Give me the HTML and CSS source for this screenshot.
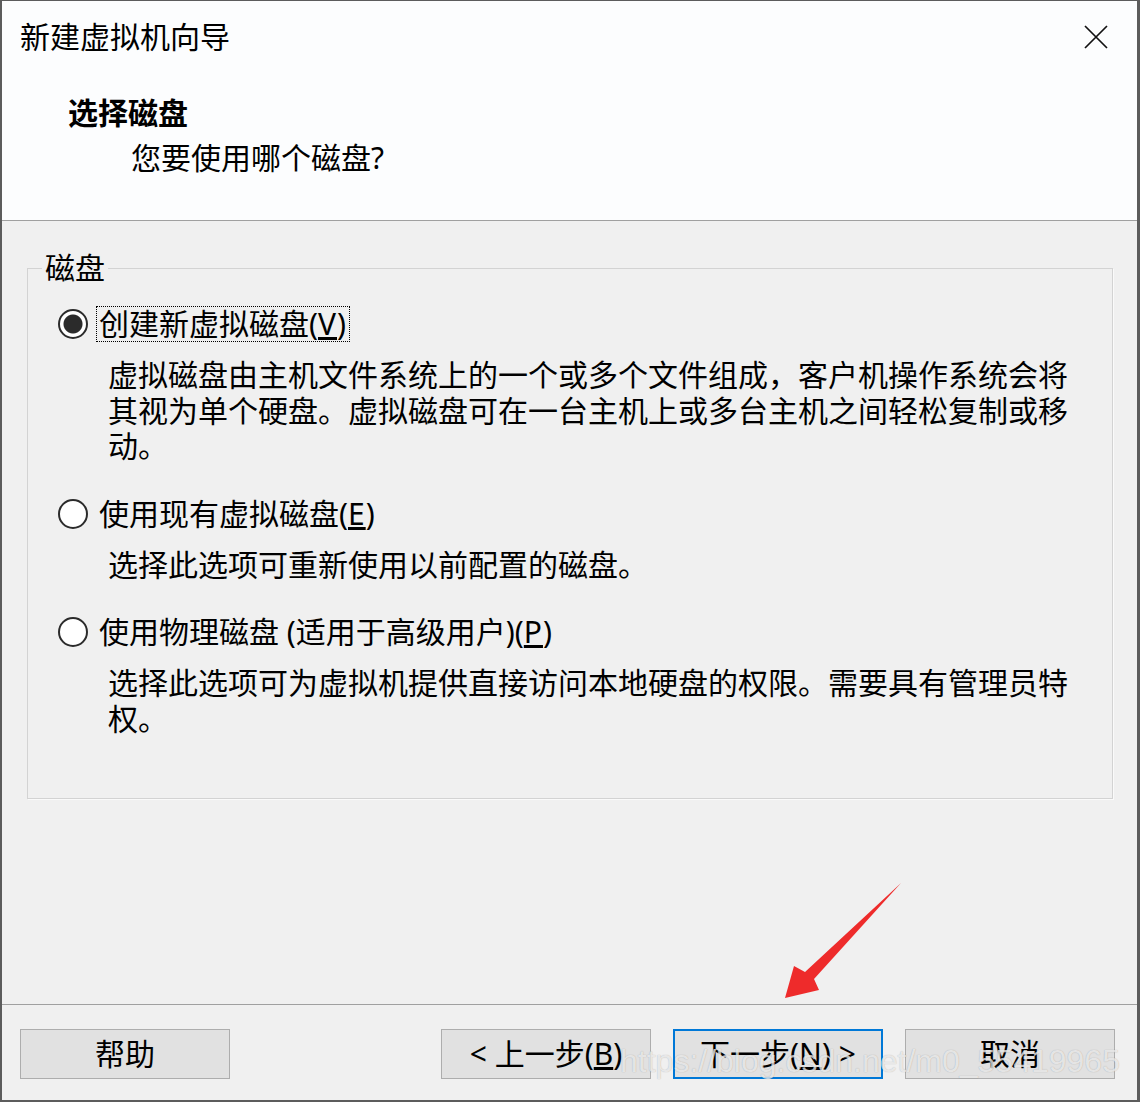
FILE: index.html
```html
<!DOCTYPE html>
<html lang="zh-CN">
<head>
<meta charset="utf-8">
<title>新建虚拟机向导</title>
<link rel="stylesheet" href="styles.css">
</head>
<body>
<div class="window">
  <header class="header">
    <div class="titlebar">
      <span class="title">新建虚拟机向导</span>
      <svg class="close" width="24" height="24" viewBox="0 0 24 24"><path d="M1 1L23 23M23 1L1 23" stroke="#111" stroke-width="1.7" fill="none"/></svg>
    </div>
    <h1 class="heading">选择磁盘</h1>
    <p class="subheading">您要使用哪个磁盘?</p>
  </header>
  <main class="content">
    <fieldset class="group">
      <legend class="legend">磁盘</legend>
      <div class="options">
        <div class="option">
          <span class="radio checked"></span>
          <span class="label focus">创建新虚拟磁盘(<u>V</u>)</span>
        </div>
        <p class="desc">虚拟磁盘由主机文件系统上的一个或多个文件组成，客户机操作系统会将其视为单个硬盘。虚拟磁盘可在一台主机上或多台主机之间轻松复制或移动。</p>
        <div class="option">
          <span class="radio"></span>
          <span class="label">使用现有虚拟磁盘(<u>E</u>)</span>
        </div>
        <p class="desc">选择此选项可重新使用以前配置的磁盘。</p>
        <div class="option">
          <span class="radio"></span>
          <span class="label">使用物理磁盘 (适用于高级用户)(<u>P</u>)</span>
        </div>
        <p class="desc">选择此选项可为虚拟机提供直接访问本地硬盘的权限。需要具有管理员特权。</p>
      </div>
    </fieldset>
  </main>
  <footer class="footer">
    <button class="btn">帮助</button>
    <div class="spacer"></div>
    <button class="btn">&lt; 上一步(<u>B</u>)</button>
    <button class="btn primary">下一步(<u>N</u>) &gt;</button>
    <button class="btn">取消</button>
    <span class="watermark">https://blog.csdn.net/m0_55419965</span>
  </footer>
  <svg class="arrow" width="125" height="125" viewBox="780 880 125 125">
    <polygon points="901,883 814,979 819,990 785,998 794,966 805,972" fill="#ee2b2b"/>
  </svg>
</div>
</body>
</html>
```

FILE: styles.css
```css
* { box-sizing: border-box; }
html, body { margin: 0; padding: 0; background: #f0f0f0; }
body {
  font-family: "Noto Sans", "Noto Sans CJK SC", sans-serif;
  color: #000;
}
.window {
  position: relative;
  width: 1140px;
  height: 1102px;
  border-style: solid;
  border-color: #5c5c5c;
  border-width: 1px 3px 2px 2px;
  display: flex;
  flex-direction: column;
  background: #f0f0f0;
}
.header {
  height: 220px;
  flex: none;
  background: #fcfdfe;
  border-bottom: 1px solid #a0a0a0;
}
.titlebar {
  display: flex;
  align-items: center;
  justify-content: space-between;
  margin-top: 16px;
  height: 40px;
  padding: 0 29px 0 18px;
}
.title { font-size: 30px; line-height: 40px; }
.close { display: block; }
.heading {
  margin: 36px 0 0 66px;
  font-size: 30px;
  line-height: 40px;
  font-weight: bold;
}
.subheading {
  margin: 5px 0 0 129px;
  font-size: 30px;
  line-height: 40px;
}
.content {
  flex: 1;
  padding: 32px 24px 0 25px;
}
.group {
  margin: 0;
  padding: 23px 0 62px 0;
  border: 1px solid #d3d3d3;
  box-shadow: 1px 1px 0 #fafafa;
}
.legend {
  margin-left: 14px;
  padding: 0 3px;
  font-size: 30px;
  line-height: 30px;
}
.options { padding-left: 30px; }
.option {
  display: flex;
  align-items: center;
  height: 36px;
  margin-top: 32px;
}
.option:first-child { margin-top: 0; }
.radio {
  width: 30px;
  height: 30px;
  flex: none;
  border: 2px solid #2b2b2b;
  border-radius: 50%;
  background: #fff;
}
.radio.checked {
  background: radial-gradient(circle, #2b2b2b 0 9px, #fff 10px);
}
.label {
  margin-left: 8px;
  padding: 0 3px 0 2px;
  border: 1px solid transparent;
  font-size: 30px;
  line-height: 34px;
  white-space: nowrap;
}
.label u { letter-spacing: 1px; }
.label.focus { border: 1px dotted #000; }
.desc {
  margin: 15px 0 0 50px;
  width: 975px;
  font-size: 30px;
  line-height: 35.5px;
}
.footer {
  position: relative;
  flex: none;
  height: 96px;
  border-top: 1px solid #a0a0a0;
  display: flex;
  align-items: flex-start;
  gap: 22px;
  padding: 24px 22px 0 18px;
}
.spacer { flex: 1; }
.btn {
  width: 210px;
  height: 50px;
  margin: 0;
  padding: 0;
  background: #e1e1e1;
  border: 1px solid #adadad;
  font-family: "Noto Sans", "Noto Sans CJK SC", sans-serif;
  font-size: 30px;
  line-height: 46px;
  color: #000;
}
.btn.primary { border: 2px solid #0078d7; }
.watermark {
  position: absolute;
  left: 618px;
  top: 40px;
  font-family: "Liberation Sans", sans-serif;
  font-size: 32px;
  line-height: 32px;
  color: rgba(255, 255, 255, 0.72);
  text-shadow: 0 0 1px rgba(0, 0, 0, 0.3);
  white-space: nowrap;
  pointer-events: none;
}
.arrow {
  position: absolute;
  left: 778px;
  top: 879px;
}
```
